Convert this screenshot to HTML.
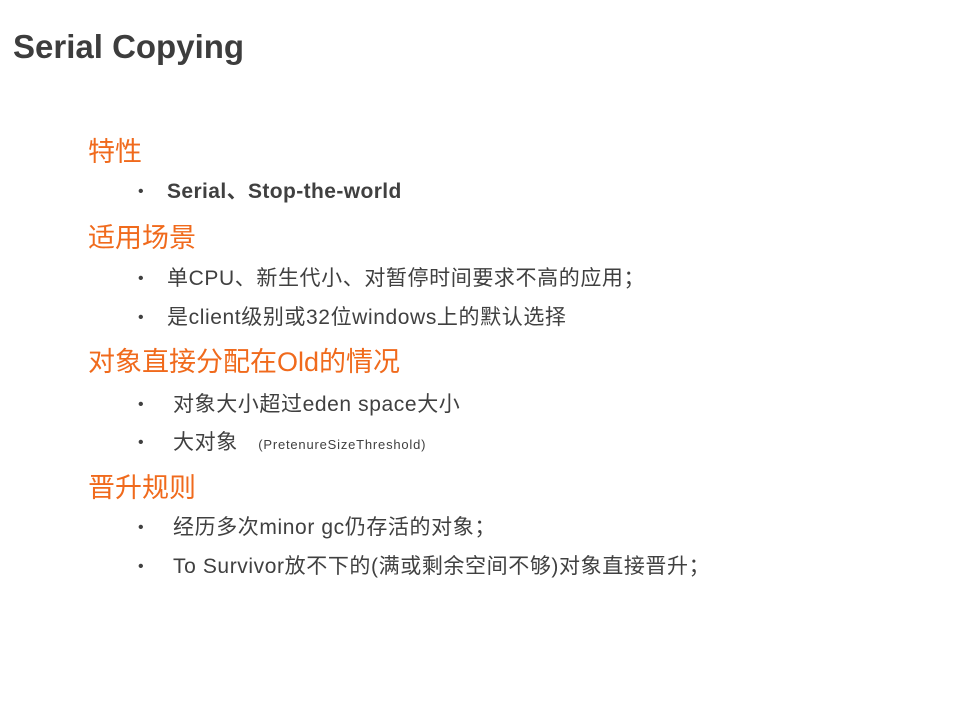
<!DOCTYPE html><html><head><meta charset="utf-8"><style>
body{margin:0;width:960px;height:720px;background:#fff;position:relative;overflow:hidden;font-family:"Liberation Sans","Noto Sans CJK SC",sans-serif;}
div{position:absolute;white-space:nowrap;line-height:1;}
.t{left:13px;top:30px;font-size:33px;font-weight:bold;color:#3d3d3d;}
.h{left:88px;font-size:27px;color:#f06a1c;}
.b{font-size:21px;color:#404040;letter-spacing:0.6px;}
.d{font-size:16px;color:#404040;}
</style></head><body>
<div class="t">Serial Copying</div>
<div class="h" style="top:139px">特性</div>
<div class="d" style="left:138px;top:184px">•</div>
<div class="b" style="left:167px;top:181px;font-weight:bold;letter-spacing:0.4px">Serial、Stop-the-world</div>
<div class="h" style="top:225px">适用场景</div>
<div class="d" style="left:138px;top:271px">•</div>
<div class="b" style="left:167px;top:268px">单CPU、新生代小、对暂停时间要求不高的应用；</div>
<div class="d" style="left:138px;top:310px">•</div>
<div class="b" style="left:167px;top:307px">是client级别或32位windows上的默认选择</div>
<div class="h" style="top:349px">对象直接分配在Old的情况</div>
<div class="d" style="left:138px;top:397px">•</div>
<div class="b" style="left:173px;top:394px">对象大小超过eden space大小</div>
<div class="d" style="left:138px;top:435px">•</div>
<div class="b" style="left:173px;top:432px">大对象 <span style="font-size:13px;margin-left:14px;letter-spacing:0.8px">(PretenureSizeThreshold)</span></div>
<div class="h" style="top:475px">晋升规则</div>
<div class="d" style="left:138px;top:520px">•</div>
<div class="b" style="left:173px;top:517px">经历多次minor gc仍存活的对象；</div>
<div class="d" style="left:138px;top:559px">•</div>
<div class="b" style="left:173px;top:556px">To Survivor放不下的(满或剩余空间不够)对象直接晋升；</div>
</body></html>
